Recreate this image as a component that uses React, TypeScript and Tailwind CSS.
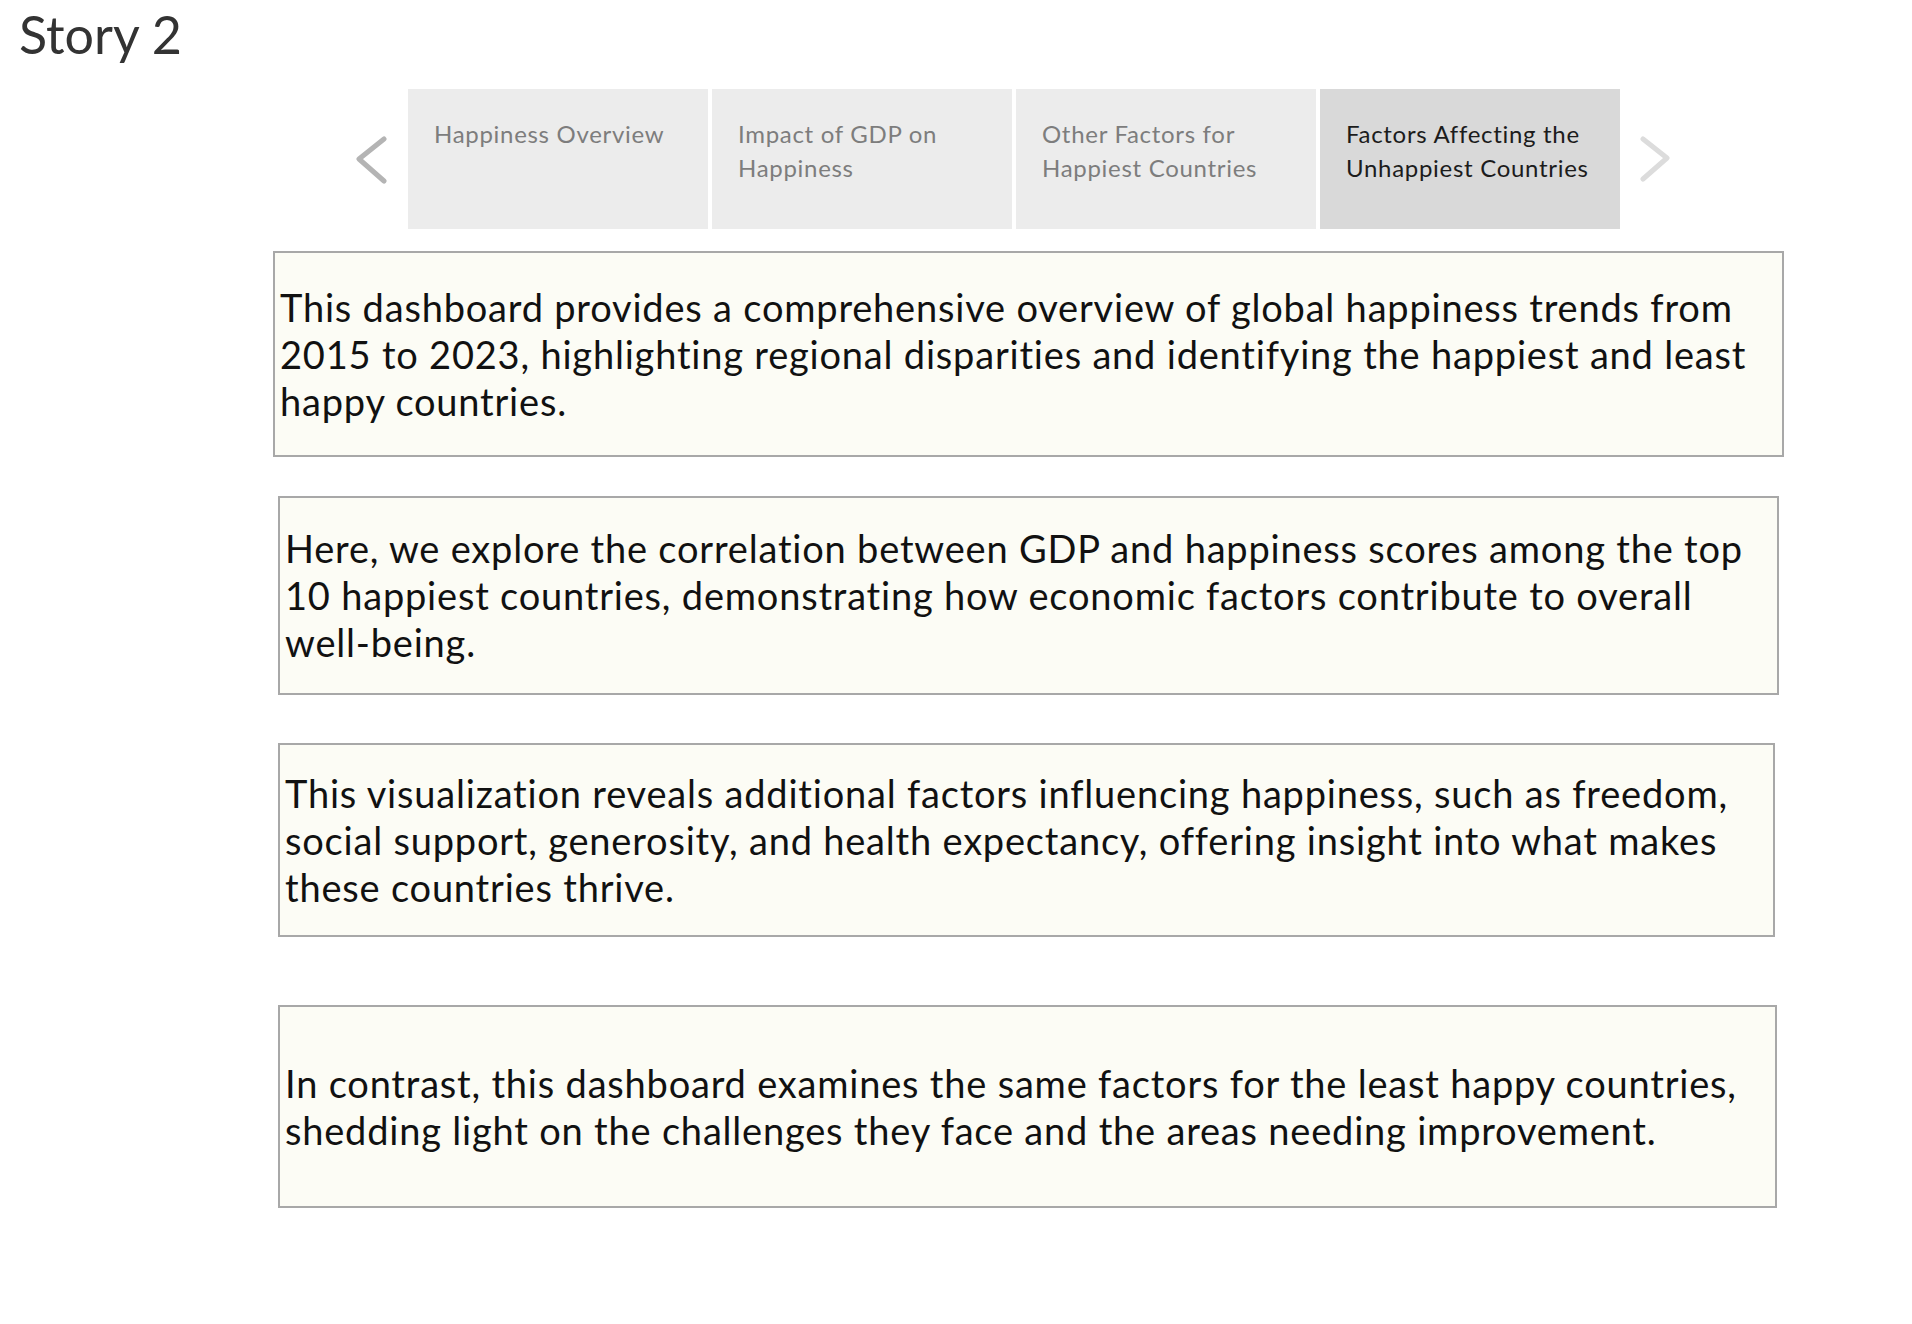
import React from 'react';

const tabs = [
  { lines: ['Happiness Overview'], active: false },
  { lines: ['Impact of GDP on', 'Happiness'], active: false },
  { lines: ['Other Factors for', 'Happiest Countries'], active: false },
  { lines: ['Factors Affecting the', 'Unhappiest Countries'], active: true },
];

const captions = [
  {
    box: 'ml-[273px] mt-[22px] w-[1511px] h-[206px]',
    lines: [
      'This dashboard provides a comprehensive overview of global happiness trends from',
      '2015 to 2023, highlighting regional disparities and identifying the happiest and least',
      'happy countries.',
    ],
  },
  {
    box: 'ml-[278px] mt-[39px] w-[1501px] h-[199px]',
    lines: [
      'Here, we explore the correlation between GDP and happiness scores among the top',
      '10 happiest countries, demonstrating how economic factors contribute to overall',
      'well-being.',
    ],
  },
  {
    box: 'ml-[278px] mt-[48px] w-[1497px] h-[194px]',
    lines: [
      'This visualization reveals additional factors influencing happiness, such as freedom,',
      'social support, generosity, and health expectancy, offering insight into what makes',
      'these countries thrive.',
    ],
  },
  {
    box: 'ml-[278px] mt-[68px] w-[1499px] h-[203px]',
    lines: [
      'In contrast, this dashboard examines the same factors for the least happy countries,',
      'shedding light on the challenges they face and the areas needing improvement.',
    ],
  },
];

const Chevron: React.FC<{ d: string; color: string }> = ({ d, color }) => (
  <svg width="34" height="52" viewBox="0 0 34 52" fill="none">
    <path d={d} stroke={color} strokeWidth="5" strokeLinecap="round" strokeLinejoin="round" />
  </svg>
);

export default function App() {
  return (
    <div className="min-h-screen w-full bg-white font-['Lato','Liberation_Sans',sans-serif]">
      <h1 className="pl-[19px] pt-[4px] h-[89px] text-[52px] leading-[60px] text-[#333333]">Story 2</h1>

      {/* story navigator */}
      <div className="flex items-center h-[140px] ml-[356px]">
        <Chevron d="M28 6 L3 26 L28 48" color="#b4b4b4" />
        <div className="flex gap-[4px] ml-[18px]">
          {tabs.map((t, i) => (
            <div
              key={i}
              className={`w-[300px] h-[140px] pl-[26px] pt-[28px] text-[24px] leading-[34px] tracking-[0.7px] whitespace-nowrap ${
                t.active ? 'bg-[#d9d9d9] text-[#1c1c1c]' : 'bg-[#ececec] text-[#7d7d7d]'
              }`}
            >
              {t.lines.map((l, j) => (
                <div key={j}>{l}</div>
              ))}
            </div>
          ))}
        </div>
        <div className="ml-[16px]">
          <Chevron d="M7 6 L31 25 L7 46" color="#dcdcdc" />
        </div>
      </div>

      {/* captions */}
      {captions.map((c, i) => (
        <div
          key={i}
          className={`${c.box} flex flex-col justify-center border-2 border-[#a8a8a8] bg-[#fcfcf5] px-[5px] text-[38px] leading-[47px] tracking-[0.8px] text-[#111111] whitespace-nowrap`}
        >
          {c.lines.map((l, j) => (
            <div key={j}>{l}</div>
          ))}
        </div>
      ))}
    </div>
  );
}
